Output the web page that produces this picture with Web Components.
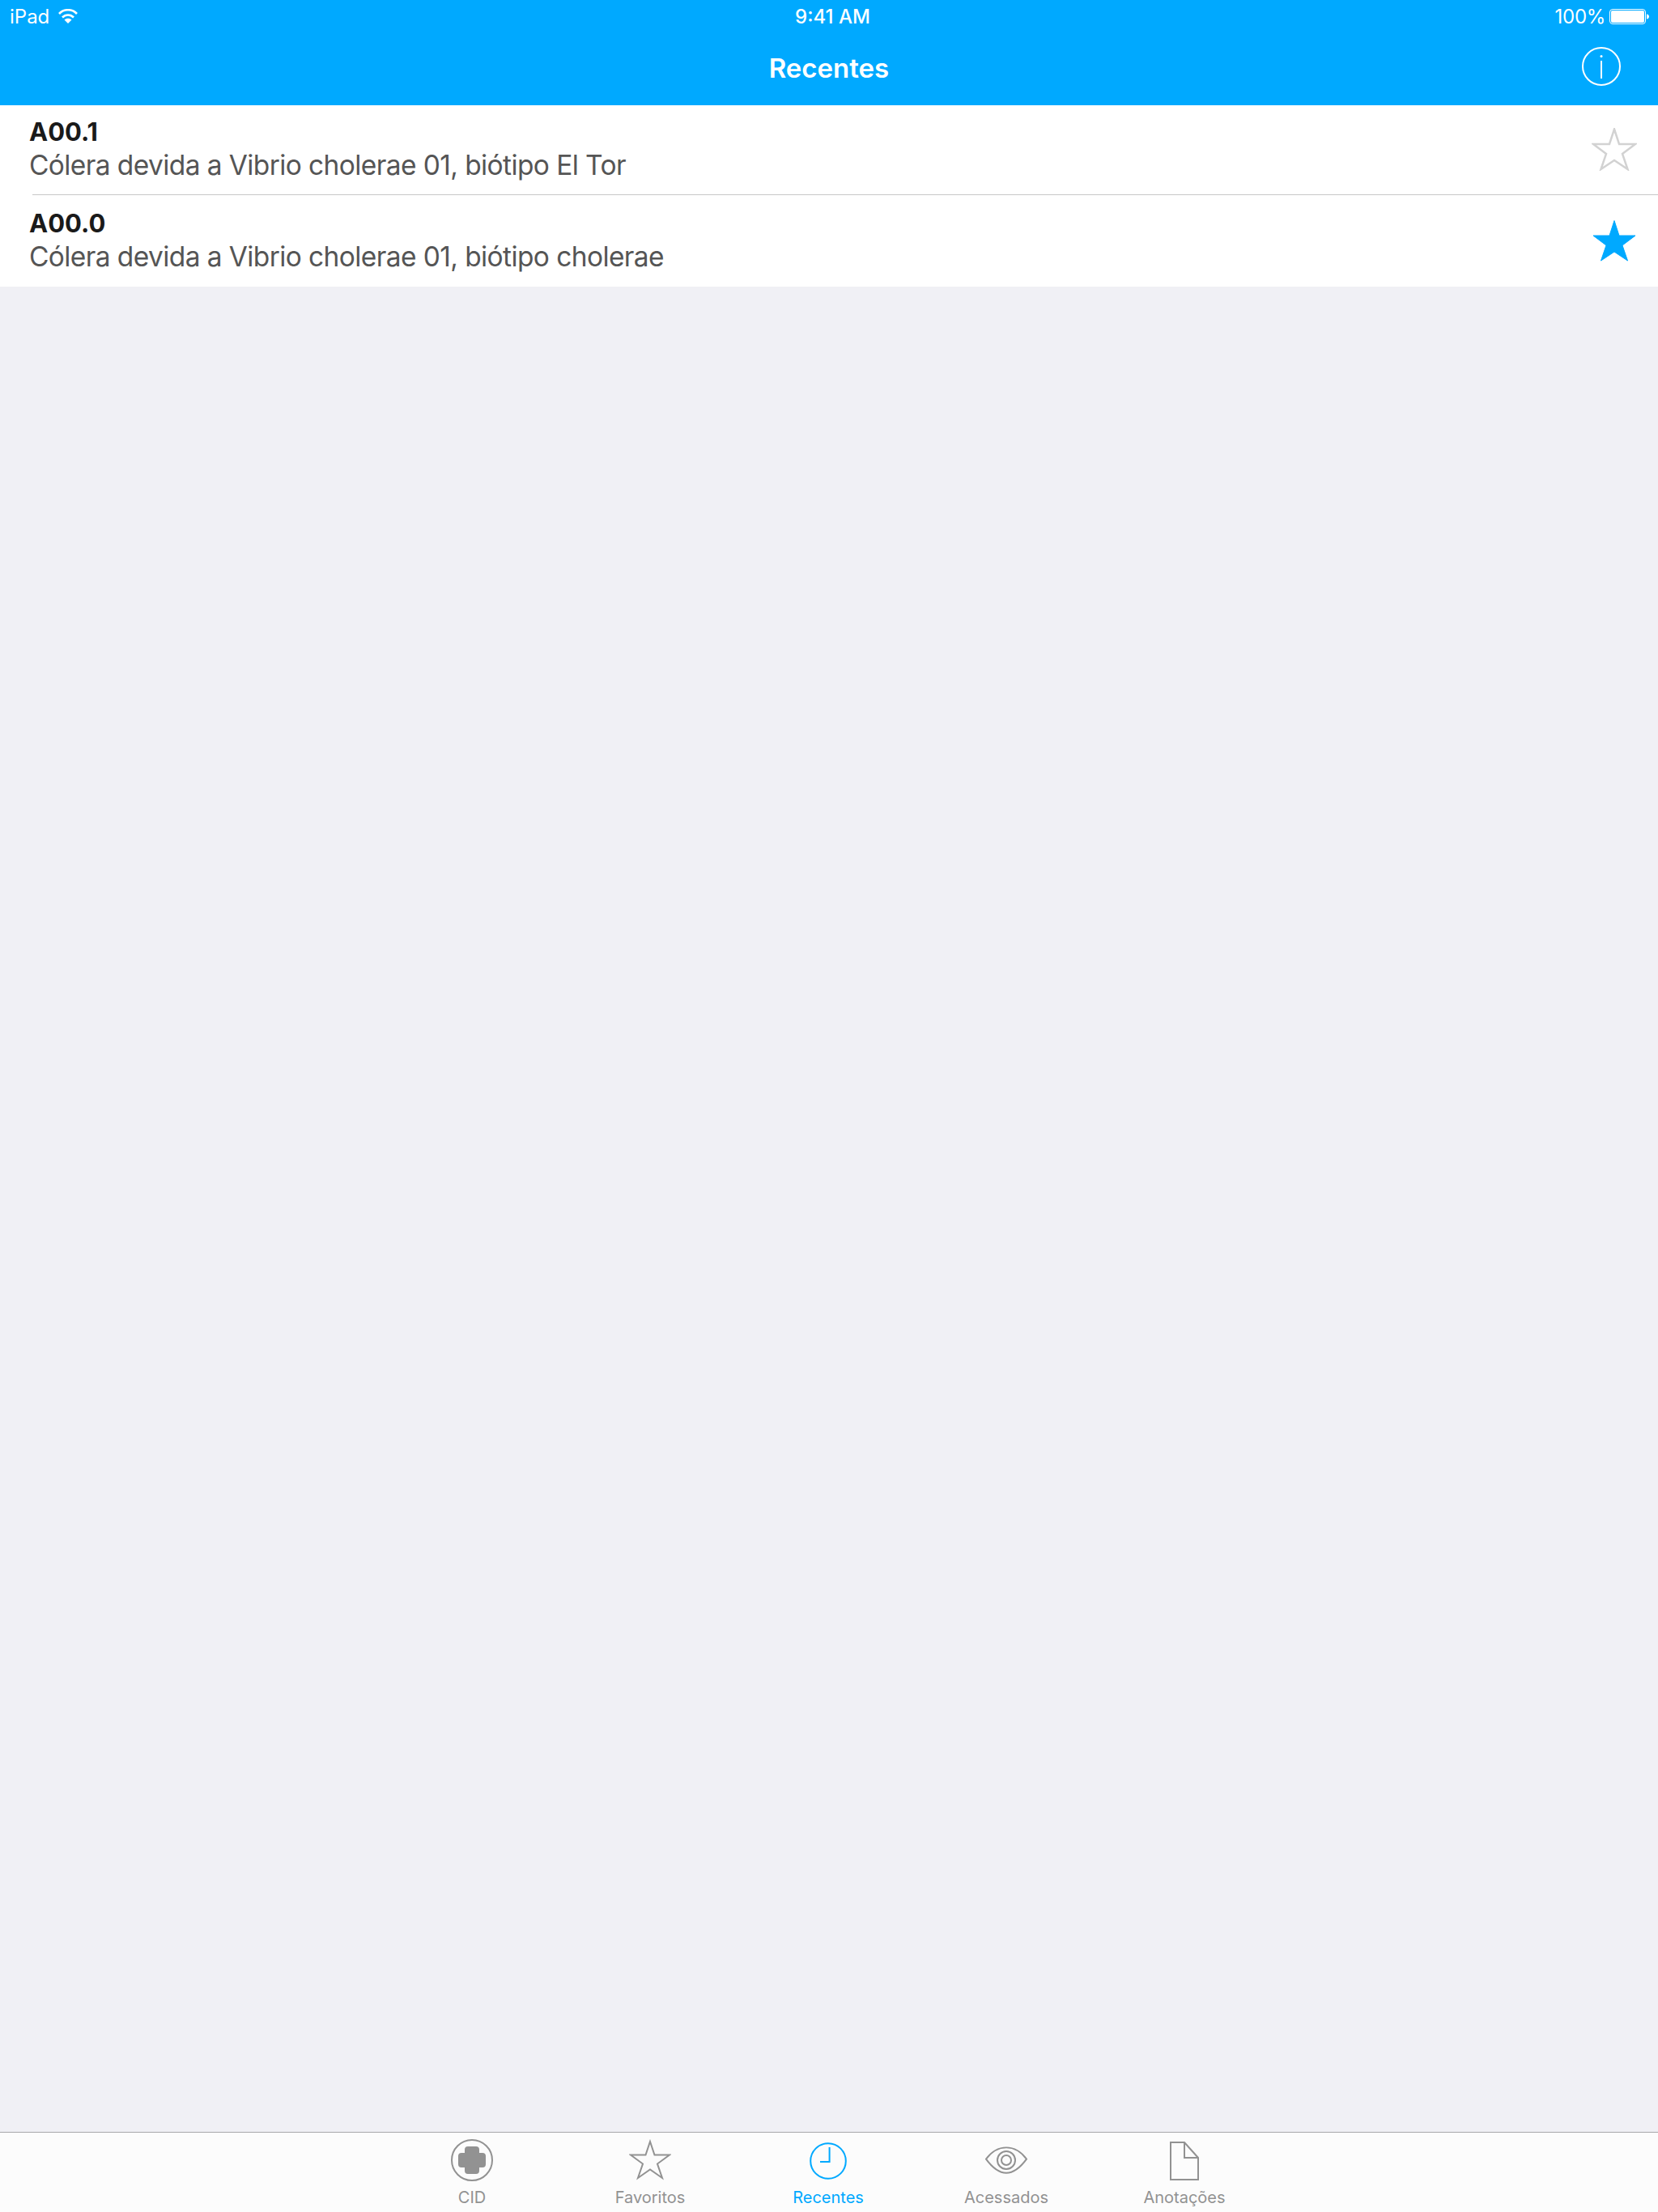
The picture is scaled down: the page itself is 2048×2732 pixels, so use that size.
<!DOCTYPE html>
<html lang="pt">
<head>
<meta charset="utf-8">
<title>Recentes</title>
<style>
  html, body { margin: 0; height: 100%; }
  body { font-family: Inter, "Liberation Sans", sans-serif; background: #f0f0f5; }
</style>
</head>
<body>
<cid-app>
  <status-bar slot="top"></status-bar>
  <nav-bar slot="top" title="Recentes"></nav-bar>
  <cid-row code="A00.1" text="Cólera devida a Vibrio cholerae 01, biótipo El Tor"></cid-row>
  <cid-row code="A00.0" text="Cólera devida a Vibrio cholerae 01, biótipo cholerae" favorite last></cid-row>
  <tab-bar slot="bottom">
    <tab-item label="CID" icon="cid"></tab-item>
    <tab-item label="Favoritos" icon="star"></tab-item>
    <tab-item label="Recentes" icon="clock" active></tab-item>
    <tab-item label="Acessados" icon="eye"></tab-item>
    <tab-item label="Anotações" icon="file"></tab-item>
  </tab-bar>
</cid-app>

<script>
  const STAR = 'M28 1.5 34 20H54L38 32 44.5 51 28 40 11.5 51 18 32 2 20H22Z';

  class CidApp extends HTMLElement {
    constructor() {
      super();
      this.attachShadow({mode: 'open'}).innerHTML = `
        <style>
          :host { display: flex; flex-direction: column; height: 2732px; background: #f0f0f5; }
          main { flex: 1; }
        </style>
        <slot name="top"></slot>
        <main><slot></slot></main>
        <slot name="bottom"></slot>`;
    }
  }

  class StatusBar extends HTMLElement {
    constructor() {
      super();
      this.attachShadow({mode: 'open'}).innerHTML = `
        <style>
          :host { display: grid; grid-template-columns: 1fr auto 1fr; align-items: center; height: 40px;
            padding: 0 11px 0 12px; background: #00a9ff; color: #fff; font-size: 24px; }
          .left, .right { display: flex; align-items: center; }
          .left { gap: 11px; }
          .right { justify-content: flex-end; gap: 5px; letter-spacing: -0.3px; }
          .time { font-weight: 500; margin-left: 8px; }
          svg { display: block; }
        </style>
        <div class="left">
          <span>iPad</span>
          <svg width="24" height="18" viewBox="0 0 24 18" fill="none" stroke="#fff" stroke-width="2.6">
            <path d="M1 6C7-.4 17-.4 23 6"/>
            <path d="M5 10.5C9 6.5 15 6.5 19 10.5"/>
            <path d="M12 18 7.5 13.5C10 11.3 14 11.3 16.5 13.5Z" fill="#fff" stroke="none"/>
          </svg>
        </div>
        <span class="time">9:41 AM</span>
        <div class="right">
          <span>100%</span>
          <svg width="49" height="19" viewBox="0 0 49 19">
            <rect x=".5" y=".5" width="44" height="18" rx="3.5" fill="none" stroke="#fff"/>
            <rect x="2" y="2" width="41" height="15" rx="2" fill="#fff"/>
            <path d="M46 6.5C48 6.5 49 8 49 9.5S48 12.5 46 12.5Z" fill="#fff"/>
          </svg>
        </div>`;
    }
  }

  class NavBar extends HTMLElement {
    constructor() {
      super();
      this.attachShadow({mode: 'open'}).innerHTML = `
        <style>
          :host { display: grid; grid-template-columns: 1fr auto 1fr; align-items: center; height: 90px;
            padding: 0 46px 6px 0; box-sizing: border-box; background: #00a9ff; color: #fff; }
          h1 { grid-column: 2; margin: 3px 0 0 46px; font-size: 33px; font-weight: 600; }
          svg { justify-self: end; display: block; }
        </style>
        <h1></h1>
        <svg width="48" height="48" viewBox="0 0 48 48" fill="none" stroke="#fff" stroke-width="2">
          <circle cx="24" cy="24" r="23"/>
          <path d="M24 17V39"/>
          <circle cx="24" cy="11.5" r="1.5" fill="#fff" stroke="none"/>
        </svg>`;
      this.shadowRoot.querySelector('h1').textContent = this.getAttribute('title');
    }
  }

  class CidRow extends HTMLElement {
    constructor() {
      super();
      this.attachShadow({mode: 'open'}).innerHTML = `
        <style>
          :host { display: block; background: #fff; height: 113px; box-sizing: border-box; padding-top: 16px;
            position: relative; }
          :host(:first-of-type) { height: 111px; padding-top: 14px; }
          .row { display: flex; justify-content: space-between; align-items: center; padding: 0 26px 0 36px; }
          .code { font-size: 31px; font-weight: 700; line-height: 38px; color: #1a1a1a; }
          .text { font-size: 33.5px; line-height: 42px; color: #555; margin-top: 1px; letter-spacing: -0.6px; }
          svg { display: block; margin-right: 0; }
          .sep { position: absolute; left: 40px; right: 0; bottom: 0; height: 1px; background: #c8c8c8; }
          :host([last]) .sep { display: none; }
        </style>
        <div class="row">
          <div>
            <div class="code"></div>
            <div class="text"></div>
          </div>
          <svg width="56" height="53" viewBox="0 0 56 53"><path d="${STAR}"/></svg>
        </div>
        <div class="sep"></div>`;
      this.shadowRoot.querySelector('.code').textContent = this.getAttribute('code');
      this.shadowRoot.querySelector('.text').textContent = this.getAttribute('text');
      const star = this.shadowRoot.querySelector('svg path');
      if (this.hasAttribute('favorite')) {
        star.setAttribute('fill', '#00a9ff');
        star.setAttribute('stroke', '#00a9ff');
      } else {
        star.setAttribute('fill', 'none');
        star.setAttribute('stroke', '#d2d2d2');
        star.setAttribute('stroke-width', '2.5');
      }
    }
  }

  class TabBar extends HTMLElement {
    constructor() {
      super();
      this.attachShadow({mode: 'open'}).innerHTML = `
        <style>
          :host { display: flex; justify-content: center; height: 99px; box-sizing: border-box; padding-right: 2px;
            background: #fcfcfc; border-top: 1px solid #a7a7aa; }
        </style>
        <slot></slot>`;
    }
  }

  const TAB_ICONS = {
    cid: `<circle cx="26" cy="26" r="25"/>
          <path fill="currentColor" stroke="none" d="M21 9H31Q35 9 35 13V17H39Q43 17 43 21V31Q43 35 39 35H35V39Q35 43 31 43H21Q17 43 17 39V35H13Q9 35 9 31V21Q9 17 13 17H17V13Q17 9 21 9Z"/>`,
    star: `<path d="M26 3 31.5 19.5H50L35 30.5 41 48 26 37.5 11 48 17 30.5 2 19.5H20.5Z"/>`,
    clock: `<circle cx="26" cy="27" r="21.8"/><path d="M27.6 10V28H16"/>`,
    eye: `<path d="M1 27C8 17 17 12 26 12S44 17 51 27C44 37 35 45 26 45S8 37 1 27Z" transform="translate(0 -1) scale(1 .95)"/>
          <circle cx="26" cy="26" r="11"/><circle cx="26" cy="26" r="6"/>`,
    file: `<path d="M9 4H26L43 23V50H9Z"/><path d="M26 4V23H43"/>`
  };

  class TabItem extends HTMLElement {
    constructor() {
      super();
      this.attachShadow({mode: 'open'}).innerHTML = `
        <style>
          :host { display: flex; flex-direction: column; align-items: center; width: 220px; padding-top: 8px;
            box-sizing: border-box; color: #929292; }
          :host([active]) { color: #00a9ff; }
          svg { display: block; fill: none; stroke: currentColor; stroke-width: 2; }
          span { font-size: 20px; line-height: 24px; margin-top: 8px; }
        </style>
        <svg width="52" height="52" viewBox="0 0 52 52">${TAB_ICONS[this.getAttribute('icon')]}</svg>
        <span></span>`;
      this.shadowRoot.querySelector('span').textContent = this.getAttribute('label');
    }
  }

  customElements.define('cid-app', CidApp);
  customElements.define('status-bar', StatusBar);
  customElements.define('nav-bar', NavBar);
  customElements.define('cid-row', CidRow);
  customElements.define('tab-bar', TabBar);
  customElements.define('tab-item', TabItem);
</script>
</body>
</html>
